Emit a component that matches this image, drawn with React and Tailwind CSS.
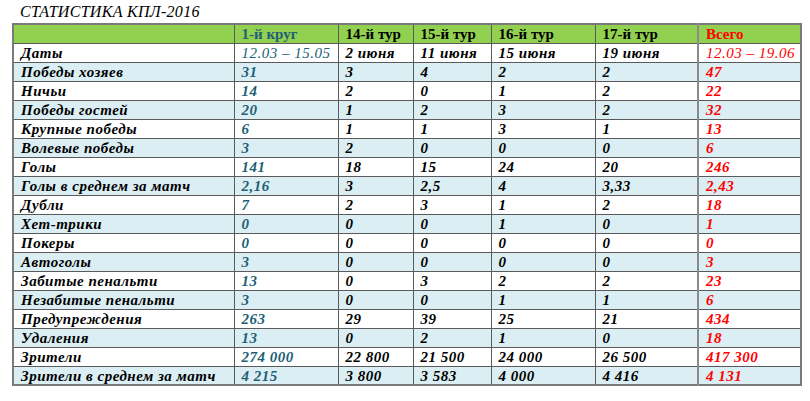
const cols = ["1-й круг", "14-й тур", "15-й тур", "16-й тур", "17-й тур", "Всего"];

const rows = [
  ["Даты", "12.03 – 15.05", "2 июня", "11 июня", "15 июня", "19 июня", "12.03 – 19.06"],
  ["Победы хозяев", "31", "3", "4", "2", "2", "47"],
  ["Ничьи", "14", "2", "0", "1", "2", "22"],
  ["Победы гостей", "20", "1", "2", "3", "2", "32"],
  ["Крупные победы", "6", "1", "1", "3", "1", "13"],
  ["Волевые победы", "3", "2", "0", "0", "0", "6"],
  ["Голы", "141", "18", "15", "24", "20", "246"],
  ["Голы в среднем за матч", "2,16", "3", "2,5", "4", "3,33", "2,43"],
  ["Дубли", "7", "2", "3", "1", "2", "18"],
  ["Хет-трики", "0", "0", "0", "1", "0", "1"],
  ["Покеры", "0", "0", "0", "0", "0", "0"],
  ["Автоголы", "3", "0", "0", "0", "0", "3"],
  ["Забитые пенальти", "13", "0", "3", "2", "2", "23"],
  ["Незабитые пенальти", "3", "0", "0", "1", "1", "6"],
  ["Предупреждения", "263", "29", "39", "25", "21", "434"],
  ["Удаления", "13", "0", "2", "1", "0", "18"],
  ["Зрители", "274 000", "22 800", "21 500", "24 000", "26 500", "417 300"],
  ["Зрители в среднем за матч", "4 215", "3 800", "3 583", "4 000", "4 416", "4 131"],
];

const widths = ["w-[221px]", "w-[104px]", "w-[75px]", "w-[78px]", "w-[104px]", "w-[103px]", "w-[103px]"];

export default function App() {
  return (
    <div className="w-[810px] h-[401px] bg-white font-[family-name:Liberation_Serif,serif] text-[15px] leading-none">
      <div className="pl-[20px] pt-[4px] h-[23px] italic text-[16px] tracking-[0.3px] text-black">СТАТИСТИКА КПЛ-2016</div>
      <table className="ml-[12px] w-[789px] table-fixed border-collapse border-2 border-[#7a7a7a]">
        <colgroup>
          {widths.map((w, i) => (
            <col key={i} className={w} />
          ))}
        </colgroup>
        <thead>
          <tr className="h-[19px] bg-[#92d050]">
            <th className="border border-[#5a5a5a]"></th>
            {cols.map((c, i) => (
              <th
                key={c}
                className={
                  "border border-[#5a5a5a] pl-[7px] pt-[2px] text-left font-bold " +
                  (i === 0 ? "text-[#215f76]" : i === 5 ? "text-[#ff0000] border-l-2 border-l-[#8a8a8a]" : "text-black")
                }
              >
                {c}
              </th>
            ))}
          </tr>
        </thead>
        <tbody>
          {rows.map((r, ri) => (
            <tr key={ri} className={"h-[19px] " + (ri % 2 === 1 ? "bg-[#daeef3]" : "bg-white")}>
              {r.map((v, ci) => {
                let cls = "border border-[#5a5a5a] pl-[7px] pt-[2px] italic tracking-[0.5px] whitespace-nowrap ";
                if (ci === 0) cls += "font-bold text-black";
                else if (ci === 1) cls += (ri === 0 ? "font-normal" : "font-semibold") + " text-[#215f76]";
                else if (ci === 6) cls += (ri === 0 ? "font-normal" : "font-bold") + " text-[#ff0000] border-l-2 border-l-[#8a8a8a]";
                else cls += (ri === 0 ? "font-semibold" : "font-bold") + " text-black";
                return (
                  <td key={ci} className={cls}>
                    {v}
                  </td>
                );
              })}
            </tr>
          ))}
        </tbody>
      </table>
    </div>
  );
}
